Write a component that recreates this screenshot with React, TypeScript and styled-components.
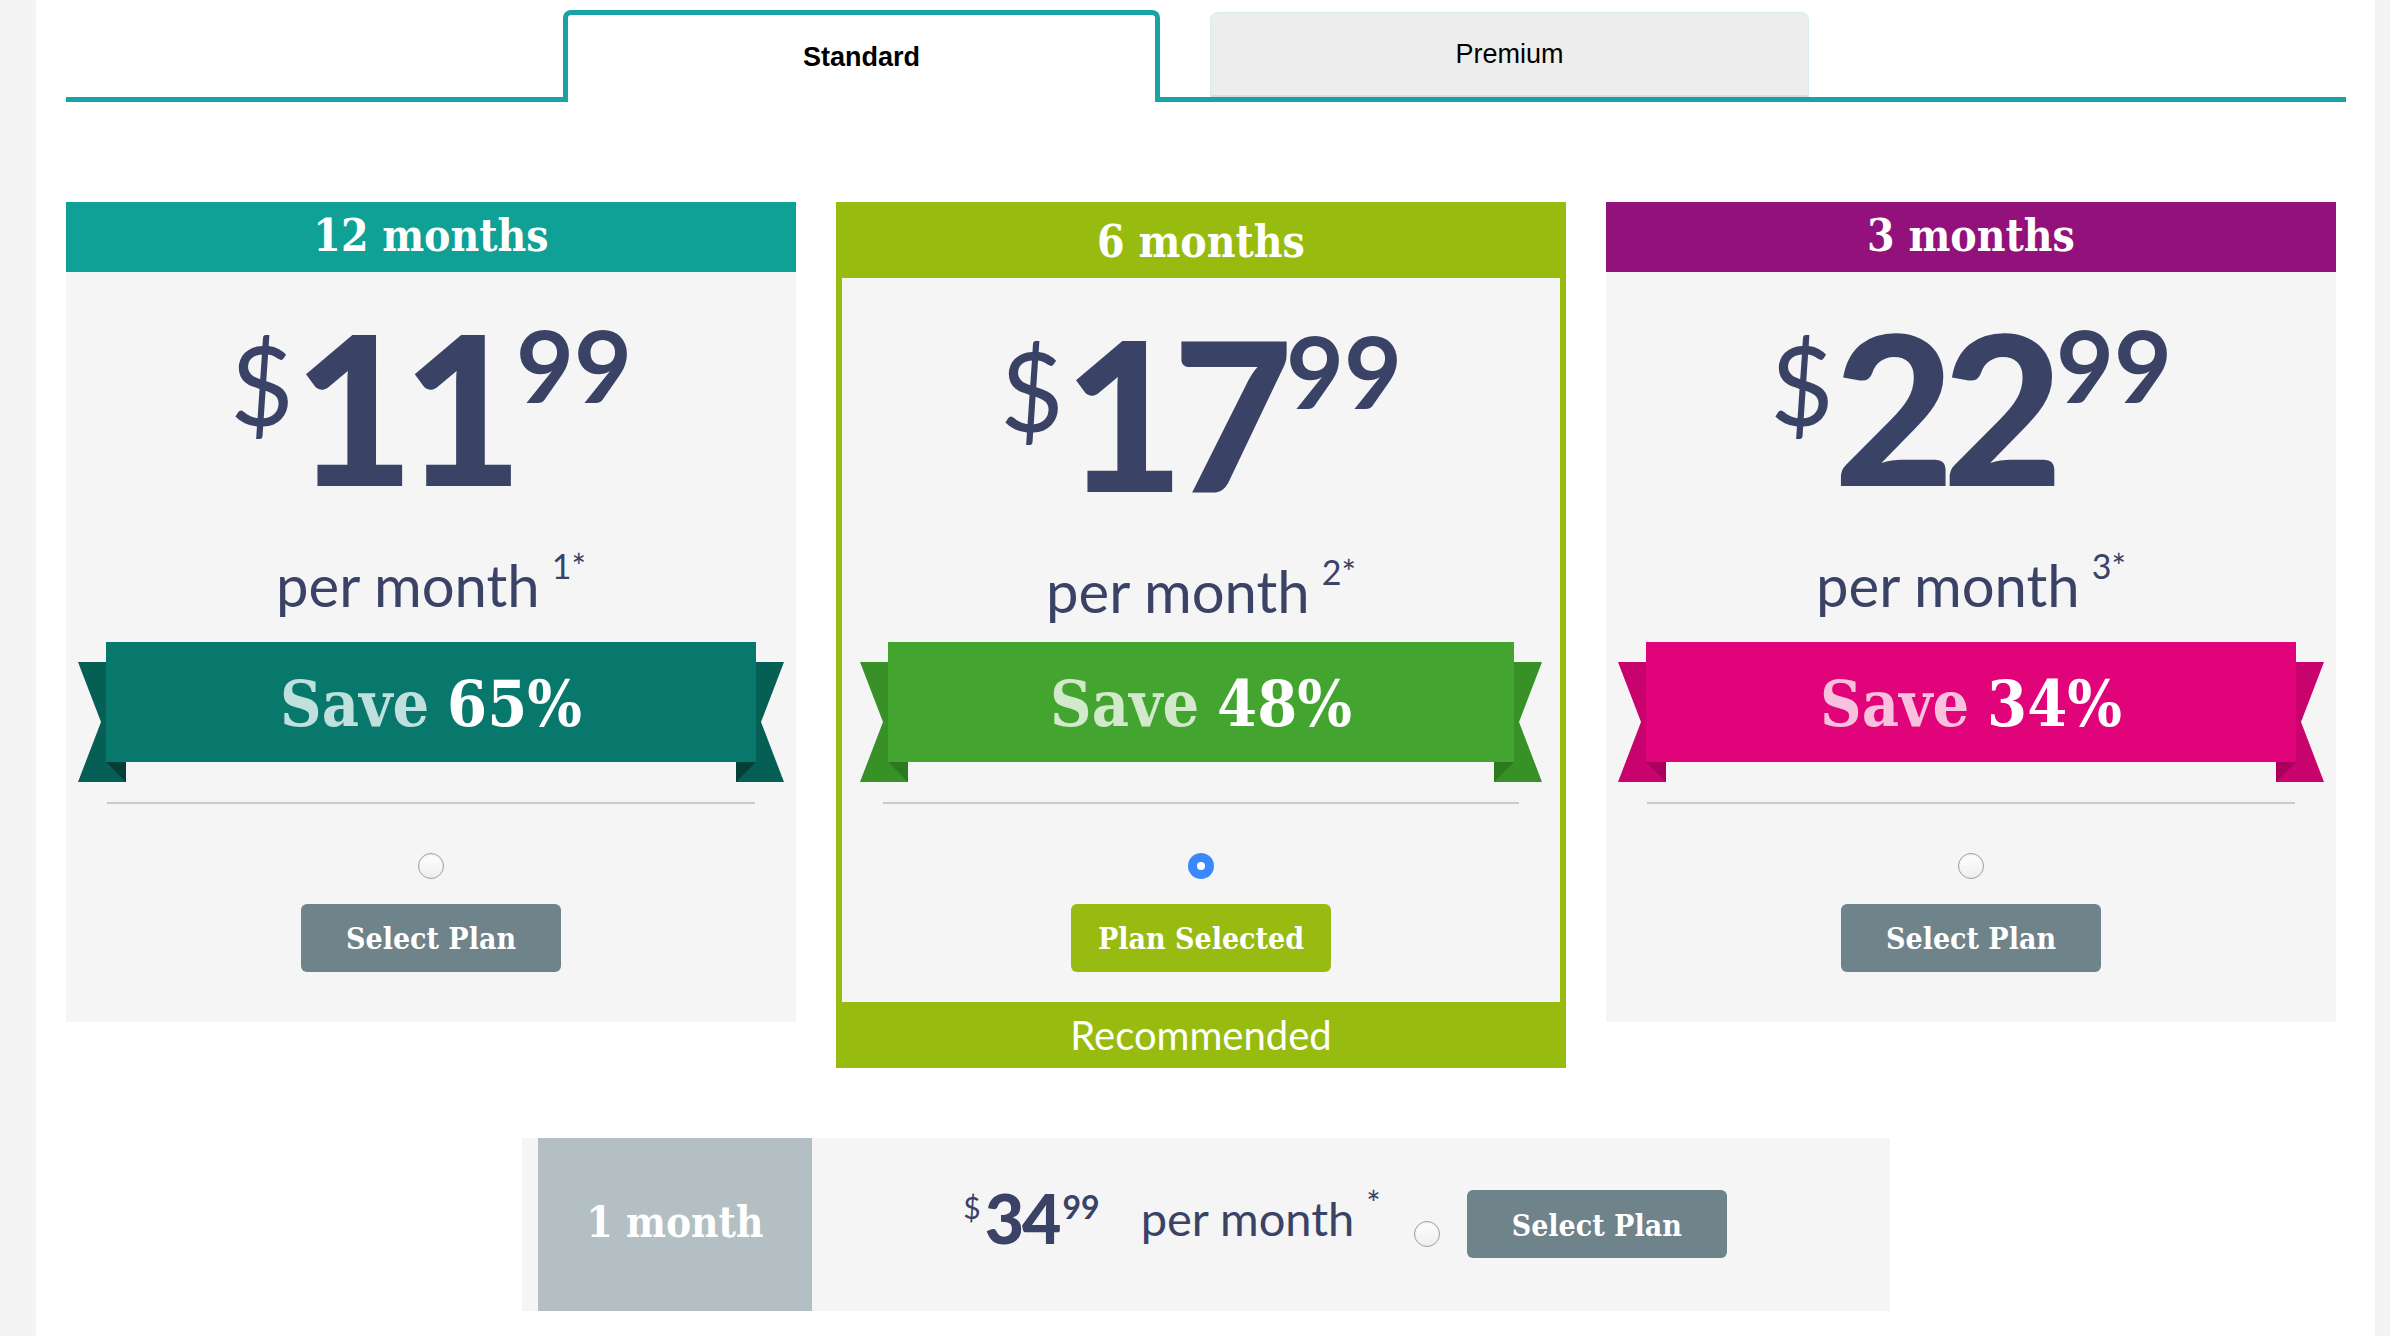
import React, { useState } from "react";
import styled, { createGlobalStyle } from "styled-components";

const slab = `"DejaVu Serif Condensed", "DejaVu Serif", serif`;
const sans = `Lato, "Open Sans", sans-serif`;
const teal = "#17a3a7";
const ink = "#3a4266";

const GlobalStyle = createGlobalStyle`
  body {
    margin: 0;
    background: #f4f4f4;
    font-family: ${sans};
  }
`;

const Page = styled.div`
  margin-left: 36px;
  width: 2339px;
  min-height: 1336px;
  box-sizing: border-box;
  padding: 10px 29px 0 30px;
  background: #fff;
`;

const TabBar = styled.div`
  display: flex;
  align-items: flex-end;
  height: 92px;
`;

const TabLine = styled.div`
  width: 497px;
  height: 5px;
  background: ${teal};
`;

const ActiveTab = styled.div`
  box-sizing: border-box;
  width: 597px;
  height: 92px;
  border: 5px solid ${teal};
  border-bottom: 0;
  border-radius: 8px 8px 0 0;
  display: flex;
  align-items: center;
  justify-content: center;
  padding-bottom: 2px;
  font: 700 27px "Liberation Sans", Arial, sans-serif;
  color: #000;
`;

const TabRest = styled.div`
  flex: 1;
  display: flex;
  align-items: flex-end;
  padding-left: 50px;
  border-bottom: 5px solid ${teal};
`;

const InactiveTab = styled.div`
  box-sizing: border-box;
  width: 599px;
  height: 85px;
  background: #ededed;
  border: 1px solid #d6ecee;
  border-bottom: 2px solid #dcdcdc;
  border-radius: 8px 8px 0 0;
  display: flex;
  align-items: center;
  justify-content: center;
  font: 400 27px "Liberation Sans", Arial, sans-serif;
  color: #000;
`;

const Cards = styled.div`
  display: grid;
  grid-template-columns: repeat(3, 730px);
  column-gap: 40px;
  align-items: start;
  margin-top: 100px;
`;

const Card = styled.div<{ $accent: string; $featured: boolean }>`
  background: ${(p) => (p.$featured ? p.$accent : "#f5f5f5")};
  padding: ${(p) => (p.$featured ? "0 6px" : "0")};
  display: flex;
  flex-direction: column;
`;

const CardHeader = styled.div<{ $accent: string; $featured: boolean }>`
  height: ${(p) => (p.$featured ? 76 : 70)}px;
  margin: ${(p) => (p.$featured ? "0 -6px" : "0")};
  background: ${(p) => p.$accent};
  display: flex;
  align-items: center;
  justify-content: center;
  padding-top: ${(p) => (p.$featured ? 2 : 0)}px;
  padding-bottom: ${(p) => (p.$featured ? 0 : 3)}px;
  box-sizing: border-box;
  font-family: ${slab};
  font-stretch: condensed;
  font-weight: 700;
  font-size: 44px;
  color: #fff;
`;

const CardBody = styled.div<{ $featured: boolean }>`
  background: #f5f5f5;
  display: flex;
  flex-direction: column;
  align-items: center;
  padding: 30px 0 ${(p) => (p.$featured ? 30 : 50)}px;
`;

const PriceRow = styled.div`
  display: flex;
  justify-content: center;
  align-items: flex-start;
  height: 208px;
  color: ${ink};
  font-family: ${sans};
`;

const Dollar = styled.span`
  font-size: 110px;
  font-weight: 400;
  line-height: 1;
  margin-top: 26px;
`;

const Whole = styled.span`
  font-size: 208px;
  font-weight: 900;
  line-height: 1;
  letter-spacing: -12px;
`;

const Cents = styled.span`
  font-size: 100px;
  font-weight: 700;
  line-height: 1;
  margin-top: 12px;
  margin-left: 5px;
`;

const PerMonth = styled.div`
  margin-top: 42px;
  font-family: ${sans};
  font-size: 58px;
  font-weight: 400;
  line-height: 1.15;
  color: ${ink};
`;

const Note = styled.sup<{ $lift: number }>`
  font-size: 34px;
  line-height: 0;
  vertical-align: ${(p) => p.$lift}px;
  margin-left: 12px;
`;

const Ribbon = styled.div<{ $inset: number; $gap: number }>`
  position: relative;
  align-self: stretch;
  margin: ${(p) => p.$gap}px ${(p) => p.$inset}px 0;
  height: 140px;
`;

const Band = styled.div<{ $color: string }>`
  position: relative;
  z-index: 1;
  height: 120px;
  background: ${(p) => p.$color};
  display: flex;
  align-items: center;
  justify-content: center;
  gap: 18px;
  font-family: ${slab};
  font-stretch: condensed;
  font-weight: 700;
  font-size: 64px;
  color: #fff;
  padding-top: 4px;
  box-sizing: border-box;
`;

const SaveWord = styled.span<{ $color: string }>`
  color: ${(p) => p.$color};
`;

const TailSvg = styled.svg<{ $side: "left" | "right" }>`
  position: absolute;
  top: 20px;
  ${(p) => p.$side}: -28px;
  width: 48px;
  height: 120px;
`;

const Divider = styled.div`
  align-self: stretch;
  margin: 20px 41px 0;
  height: 2px;
  background: #c5cbcf;
`;

const Radio = styled.input`
  appearance: none;
  box-sizing: border-box;
  width: 26px;
  height: 26px;
  margin: 49px 0 0;
  border-radius: 50%;
  border: 1px solid #a0a0a0;
  background: linear-gradient(#ffffff, #eeeeee);
  box-shadow: inset 0 1px 2px rgba(0, 0, 0, 0.08);
  cursor: pointer;

  &:checked {
    border: 0;
    background: #fff;
    box-shadow: inset 0 0 0 9px #3b88fd;
  }
`;

const PlanButton = styled.button<{ $selected?: boolean }>`
  margin-top: 25px;
  width: 260px;
  height: 68px;
  border: 0;
  border-radius: 6px;
  background: ${(p) => (p.$selected ? "#97bb10" : "#6f838b")};
  color: #fff;
  font-family: ${slab};
  font-stretch: condensed;
  font-weight: 700;
  font-size: 30px;
  padding-top: 3px;
  cursor: pointer;
`;

const CardFooter = styled.div`
  height: 66px;
  margin: 0 -6px;
  display: flex;
  align-items: center;
  justify-content: center;
  font-family: ${sans};
  font-size: 40px;
  font-weight: 400;
  color: #fff;
`;

const Strip = styled.div`
  width: 1368px;
  height: 173px;
  margin: 70px auto 0;
  padding-left: 16px;
  box-sizing: border-box;
  background: #f5f5f5;
  display: flex;
`;

const MonthBlock = styled.div`
  width: 274px;
  background: #b3bfc3;
  display: flex;
  align-items: center;
  justify-content: center;
  padding-bottom: 4px;
  box-sizing: border-box;
  font-family: ${slab};
  font-stretch: condensed;
  font-weight: 700;
  font-size: 42px;
  color: #fff;
`;

const StripContent = styled.div`
  flex: 1;
  display: flex;
  align-items: center;
  justify-content: center;
  padding-right: 12px;
`;

const SmallPrice = styled.div`
  display: flex;
  align-items: flex-start;
  color: ${ink};
  margin-bottom: 12px;
`;

const SmallDollar = styled.span`
  font-size: 30px;
  line-height: 1;
  margin-top: 8px;
  margin-right: 4px;
`;

const SmallWhole = styled.span`
  font-size: 68px;
  font-weight: 900;
  line-height: 1;
  letter-spacing: -2px;
`;

const SmallCents = styled.span`
  font-size: 32px;
  font-weight: 700;
  line-height: 1;
  margin-top: 7px;
  margin-left: 3px;
`;

const SmallPerMonth = styled.div`
  margin-left: 41px;
  margin-bottom: 12px;
  font-size: 47px;
  line-height: 1;
  color: ${ink};
`;

const StripRadio = styled(Radio)`
  margin: 20px 0 0 33px;
`;

const StripButton = styled(PlanButton)`
  margin: 0 0 0 27px;
`;

type Plan = {
  label: string;
  whole: string;
  note: string;
  save: string;
  accent: string;
  band: string;
  tail: string;
  fold: string;
  saveColor: string;
  featured: boolean;
};

const plans: Plan[] = [
  {
    label: "12 months",
    whole: "11",
    note: "1*",
    save: "65%",
    accent: "#0fa096",
    band: "#07786b",
    tail: "#065f54",
    fold: "#033f37",
    saveColor: "#bfe0dc",
    featured: false,
  },
  {
    label: "6 months",
    whole: "17",
    note: "2*",
    save: "48%",
    accent: "#97bc0f",
    band: "#43a52f",
    tail: "#379127",
    fold: "#2c7a1e",
    saveColor: "#d2e9cc",
    featured: true,
  },
  {
    label: "3 months",
    whole: "22",
    note: "3*",
    save: "34%",
    accent: "#92117a",
    band: "#e1037a",
    tail: "#c8036d",
    fold: "#a8005c",
    saveColor: "#f8c1de",
    featured: false,
  },
];

function Tail({ side, tail, fold }: { side: "left" | "right"; tail: string; fold: string }) {
  const left = side === "left";
  return (
    <TailSvg $side={side} viewBox="0 0 48 120">
      <polygon
        points={left ? "0,0 48,0 48,120 0,120 23,60" : "0,0 48,0 25,60 48,120 0,120"}
        fill={tail}
      />
      <polygon points={left ? "28,100 48,100 48,120" : "0,100 20,100 0,120"} fill={fold} />
    </TailSvg>
  );
}

export default function App() {
  const [selected, setSelected] = useState("6 months");

  return (
    <>
      <GlobalStyle />
      <Page>
        <TabBar>
          <TabLine />
          <ActiveTab>Standard</ActiveTab>
          <TabRest>
            <InactiveTab>Premium</InactiveTab>
          </TabRest>
        </TabBar>

        <Cards>
          {plans.map((plan) => {
            const isSel = selected === plan.label;
            return (
              <Card key={plan.label} $accent={plan.accent} $featured={plan.featured}>
                <CardHeader $accent={plan.accent} $featured={plan.featured}>
                  {plan.label}
                </CardHeader>
                <CardBody $featured={plan.featured}>
                  <PriceRow>
                    <Dollar>$</Dollar>
                    <Whole>{plan.whole}</Whole>
                    <Cents>99</Cents>
                  </PriceRow>
                  <PerMonth>
                    per month<Note $lift={28}>{plan.note}</Note>
                  </PerMonth>
                  <Ribbon $inset={plan.featured ? 46 : 40} $gap={plan.featured ? 17 : 23}>
                    <Tail side="left" tail={plan.tail} fold={plan.fold} />
                    <Band $color={plan.band}>
                      <SaveWord $color={plan.saveColor}>Save</SaveWord>
                      <span>{plan.save}</span>
                    </Band>
                    <Tail side="right" tail={plan.tail} fold={plan.fold} />
                  </Ribbon>
                  <Divider />
                  <Radio
                    type="radio"
                    name="plan"
                    checked={isSel}
                    onChange={() => setSelected(plan.label)}
                  />
                  <PlanButton $selected={isSel} onClick={() => setSelected(plan.label)}>
                    {isSel ? "Plan Selected" : "Select Plan"}
                  </PlanButton>
                </CardBody>
                {plan.featured && <CardFooter>Recommended</CardFooter>}
              </Card>
            );
          })}
        </Cards>

        <Strip>
          <MonthBlock>1 month</MonthBlock>
          <StripContent>
            <SmallPrice>
              <SmallDollar>$</SmallDollar>
              <SmallWhole>34</SmallWhole>
              <SmallCents>99</SmallCents>
            </SmallPrice>
            <SmallPerMonth>
              per month<Note $lift={20}>*</Note>
            </SmallPerMonth>
            <StripRadio
              type="radio"
              name="plan"
              checked={selected === "1 month"}
              onChange={() => setSelected("1 month")}
            />
            <StripButton
              $selected={selected === "1 month"}
              onClick={() => setSelected("1 month")}
            >
              {selected === "1 month" ? "Plan Selected" : "Select Plan"}
            </StripButton>
          </StripContent>
        </Strip>
      </Page>
    </>
  );
}
